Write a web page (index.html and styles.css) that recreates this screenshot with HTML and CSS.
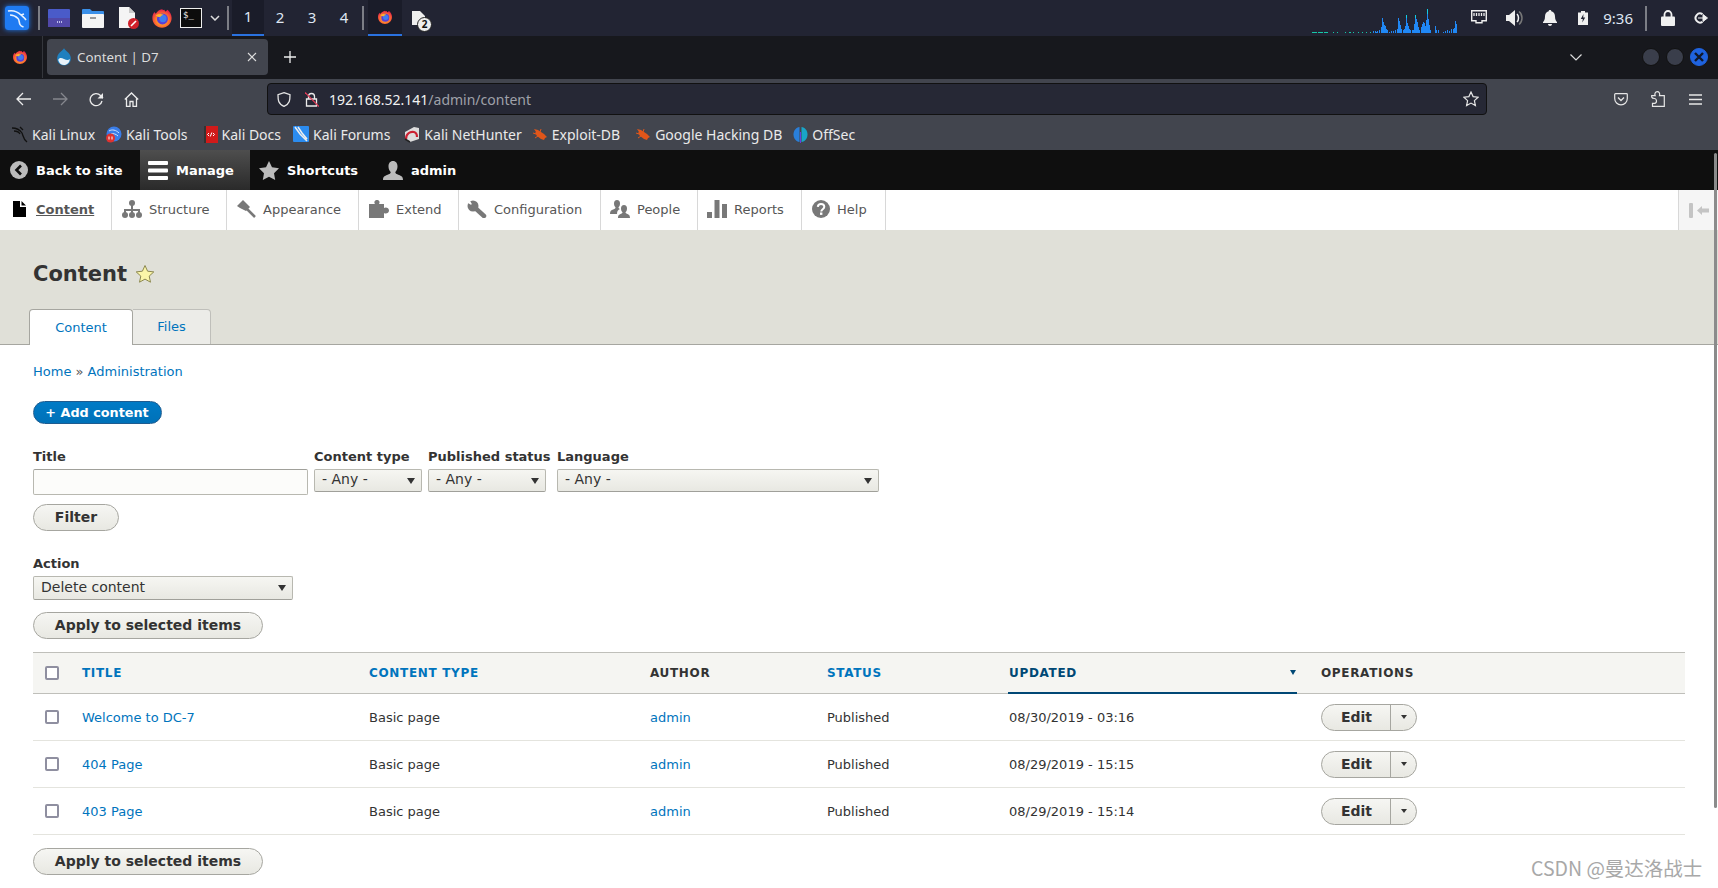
FILE: index.html
```html
<!DOCTYPE html>
<html lang="en">
<head>
<meta charset="utf-8">
<title>Content | D7</title>
<link rel="stylesheet" href="styles.css">
</head>
<body>
<svg class="defs" width="0" height="0" aria-hidden="true">
  <defs>
    <radialGradient id="ffg" cx="50%" cy="60%" r="60%"><stop offset="0" stop-color="#ffd43a"/><stop offset=".55" stop-color="#ff7a2a"/><stop offset="1" stop-color="#e3204e"/></radialGradient>
    <symbol id="firefox" viewBox="0 0 24 24">
      <path d="M12 2.500c1 1 1.600 1 3 .5-.3 1 .2 1.700 1 2l2-2c2.800 2.500 4.500 5.500 4.500 9 0 6-4.700 10.500-10.500 10.500S1.500 18 1.500 12C1.500 9.500 2.300 7.300 3.800 5.500c.3 1 .8 1.500 1.500 1.800C6.500 5 9 3 12 2.500z" fill="url(#ffg)"/>
      <circle cx="12.500" cy="13" r="6" fill="#5b3fd6"/>
      <circle cx="13" cy="12.500" r="4" fill="#3f7df0"/>
      <path d="M5 9c3-1.500 6-2 9-.5-1.500.3-3 1-4 2.500-2 0-3.500-.5-5-2z" fill="#ffb02e"/>
    </symbol>
    <symbol id="drop" viewBox="0 0 16 18">
      <path d="M8 0c.6 2.400 5.800 4.400 6.800 9.300C15.500 13.500 12.500 17.500 8 17.500S.5 13.500 1.200 9.300C2 4.400 7.400 2.400 8 0z" fill="#1f7fbe"/>
      <path d="M2.200 12c1.200-2.500 3-2.500 5.800-.9 2.500 1.200 4.500 1.400 5.800-.1-.1 3.500-2.700 6-5.800 6-2.700 0-5.100-1.900-5.800-5z" fill="#fff" opacity=".9"/>
    </symbol>
    <symbol id="bug" viewBox="0 0 16 16">
      <path d="M2 3l4 1 6 4 3 3-2 1-1 2-3-1-4-3-2-3 1-1z" fill="#e0561a"/>
      <path d="M1 7l3 1M3 12l3-2M9 3l-1 3" stroke="#e0561a" fill="none"/>
    </symbol>
  </defs>
</svg>

<div class="page">
  <header class="panel">
    <div class="panel-apps">
      <span class="kali-logo">
        <svg width="24" height="24" viewBox="0 0 24 24"><rect x="0" y="0" width="24" height="24" rx="3" fill="#1f7bf2"/><path d="M3 5c5-1 10 1 13 4 1.500 1.500 3.500 2.500 5 5M5 9c3 0 6 1.500 8 3.500 1.500 1.500 1 4 2 6 .5 1 2 2 3.500 2.500M16 9l3-1" fill="none" stroke="#e8f2ff" stroke-width="1.600"/></svg>
      </span>
      <i class="psep psep-a"></i>
      <svg class="pi" width="22" height="18" viewBox="0 0 22 18"><rect width="22" height="18" rx="1" fill="#4a5bc9"/><rect y="9" width="22" height="9" fill="#5148a8"/><path d="M9 13h5" stroke="#dfe3ff" stroke-dasharray="1 1" stroke-width="1.500"/></svg>
      <svg class="pi" width="22" height="20" viewBox="0 0 22 20"><path d="M0 2a1 1 0 0 1 1-1h7l2 2h11a1 1 0 0 1 1 1v3H0z" fill="#3a8fe8"/><rect y="6" width="22" height="14" rx="1" fill="#f4f4f4"/><rect x="8" y="9" width="6" height="2" fill="#9a9a9a"/></svg>
      <svg class="pi pi-doc" width="21" height="22" viewBox="0 0 21 22"><path d="M1 0h10l6 6v15H1z" fill="#f4f4f4"/><path d="M11 0l6 6h-6z" fill="#c9c9c9"/><circle cx="15.500" cy="16.500" r="5.500" fill="#d0202a"/><path d="M13 19l5-5" stroke="#fff" stroke-width="1.600"/></svg>
      <svg class="pi" width="22" height="22"><use href="#firefox"/></svg>
      <span class="term">$_</span>
      <svg class="chev" width="10" height="6" viewBox="0 0 10 6"><path d="M1 1l4 4 4-4" fill="none" stroke="#ddd" stroke-width="1.500"/></svg>
      <i class="psep psep-b"></i>
    </div>
    <nav class="workspaces">
      <span class="ws ws-on">1</span><span class="ws">2</span><span class="ws">3</span><span class="ws">4</span>
    </nav>
    <i class="psep psep-c"></i>
    <div class="tasks">
      <span class="task task-on"><svg width="16" height="16"><use href="#firefox"/></svg></span>
      <span class="task">
        <svg width="14" height="14" viewBox="0 0 14 14"><path d="M0 0h8l5 5v9H0z" fill="#eee"/></svg>
        <b class="count">2</b>
      </span>
    </div>
    <div class="tray">
      <svg class="net" width="146" height="26" viewBox="0 0 146 26" shape-rendering="crispEdges">
        <path d="M0 24.500h5M6 24.500h5M12 24.500h4M21 24.500h1M25 24.500h1M33 24.500h1M37 24.500h2M41 24.500h1M46 24.500h1M50 24.500h1M54 24.500h1M58 24.500h1" stroke="#16c7a8" fill="none"/>
        <path d="M62 25v-1M65 25v-1M68 25v-1M62 25v-2M64 25v-2M66 25v-2M68 25v-3M70 25v-6M71 25v-15M72 25v-11M73 25v-8M74 25v-7M75 25v-4M76 25v-3M78 25v-1M80 25v-2M82 25v-2M84 25v-3M86 25v-4M87 25v-15M88 25v-12M89 25v-8M90 25v-4M92 25v-3M93 25v-4M94 25v-7M95 25v-18M96 25v-10M97 25v-7M98 25v-4M99 25v-3M101 25v-3M102 25v-3M103 25v-9M104 25v-18M105 25v-14M106 25v-11M107 25v-6M108 25v-3M110 25v-6M111 25v-9M112 25v-11M113 25v-10M114 25v-7M115 25v-13M116 25v-24M117 25v-14M118 25v-8M119 25v-3M124 25v-7M125 25v-3M127 25v-3M132 25v-1M134 25v-2M136 25v-3M138 25v-2M140 25v-4M142 25v-4M143 25v-5M144 25v-12M145 25v-9" stroke="#2088f5" fill="none" transform="translate(-.5 0)"/>
        <path d="M115.500 1v5M94.500 7v3M103.500 7v3" stroke="#12cfe0" fill="none"/>
      </svg>
      <svg class="ti ti-net" width="16" height="14" viewBox="0 0 16 14"><path d="M.7.700h14.600v10H11v2H5v-2H.7z" fill="none" stroke="#eee" stroke-width="1.400"/><path d="M3 3v3M5.500 3v3M8 3v3M10.500 3v3M13 3v3" stroke="#eee" stroke-width="1.300"/></svg>
      <svg class="ti ti-vol" width="18" height="16" viewBox="0 0 18 16"><path d="M0 5h3l6-5v16l-6-5H0z" fill="#eee"/><path d="M11 4c2 2 2 6 0 8" stroke="#eee" stroke-width="1.500" fill="none"/><path d="M13 1.500c4 3 4 10 0 13" stroke="#777" stroke-width="1.500" fill="none"/></svg>
      <svg class="ti ti-bell" width="14" height="16" viewBox="0 0 14 16"><path d="M7 0c1 0 1.300.7 1.300 1.300C11 2 12 4 12 6.500c0 3 1 4.500 2 5.500v1H0v-1c1-1 2-2.500 2-5.500C2 4 3 2 5.700 1.300 5.700.7 6 0 7 0zM5 14h4c0 1-1 2-2 2s-2-1-2-2z" fill="#f0f0f0"/></svg>
      <svg class="ti ti-bat" width="10" height="14" viewBox="0 0 10 14"><path d="M3 0h4v1.500h3V14H0V1.500h3z" fill="#f0f0f0"/><path d="M5.500 3L2.800 8h2l-.5 3.500L7.200 6.500h-2z" fill="#222433"/></svg>
      <span class="clock">9:36</span>
      <i class="psep psep-d"></i>
      <svg class="ti ti-lock" width="14" height="16" viewBox="0 0 14 16"><path d="M3.500 7V4.500a3.500 3.500 0 0 1 7 0V7" fill="none" stroke="#f0f0f0" stroke-width="1.800"/><rect y="6.500" width="14" height="9.500" rx="1" fill="#f0f0f0"/></svg>
      <svg class="ti ti-out" width="15" height="12" viewBox="0 0 15 12"><path d="M9.500 2.200A4.500 4.500 0 1 0 9.500 9.800" fill="none" stroke="#f0f0f0" stroke-width="2"/><path d="M5 6h6M10 2.500L14.500 6 10 9.500z" stroke="#f0f0f0" fill="#f0f0f0"/></svg>
    </div>
  </header>

  <div class="tabbar">
    <span class="ff-side"><svg width="16" height="16"><use href="#firefox"/></svg></span>
    <div class="tab">
      <svg width="16" height="18"><use href="#drop"/></svg>
      <span class="tab-title">Content | D7</span>
      <svg class="tab-x" width="10" height="10" viewBox="0 0 10 10"><path d="M1 1l8 8M9 1l-8 8" stroke="#ddd" stroke-width="1.100"/></svg>
    </div>
    <svg class="tab-plus" width="12" height="12" viewBox="0 0 12 12"><path d="M6 0v12M0 6h12" stroke="#eee" stroke-width="1.300"/></svg>
    <svg class="tab-chev" width="12" height="7" viewBox="0 0 12 7"><path d="M.5.500L6 6 11.500.500" fill="none" stroke="#ddd" stroke-width="1.200"/></svg>
    <div class="winbtns">
      <i class="wb"></i><i class="wb"></i>
      <i class="wb wb-close"><svg width="10" height="10" viewBox="0 0 10 10"><path d="M1 1l8 8M9 1l-8 8" stroke="#10182a" stroke-width="2.400"/></svg></i>
    </div>
  </div>

  <div class="navbar">
    <svg class="nv nv-back" width="16" height="14" viewBox="0 0 16 14"><path d="M15 7H1.500M7 1L1 7l6 6" fill="none" stroke="#ececec" stroke-width="1.300"/></svg>
    <svg class="nv nv-fwd" width="16" height="14" viewBox="0 0 16 14"><path d="M1 7h13.500M9 1l6 6-6 6" fill="none" stroke="#85878d" stroke-width="1.300"/></svg>
    <svg class="nv nv-rel" width="15" height="15" viewBox="0 0 15 15"><path d="M13 9a6 6 0 1 1-1.500-5.500L14 6" fill="none" stroke="#ececec" stroke-width="1.300"/><path d="M14 1v5.500H8.500" fill="#ececec"/></svg>
    <svg class="nv nv-home" width="15" height="15" viewBox="0 0 15 15"><path d="M.8 7.500L7.500 1l6.700 6.500M2.500 6.500v8h3.500v-5h3v5h3.500v-8" fill="none" stroke="#ececec" stroke-width="1.300"/></svg>
    <div class="urlbar">
      <svg class="u-shield" width="14" height="15" viewBox="0 0 14 15"><path d="M7 .700l6 2c0 5 0 9-6 11.600C1 11.700 1 7.700 1 2.700z" fill="none" stroke="#e6e6e6" stroke-width="1.300"/></svg>
      <svg class="u-lock" width="14" height="15" viewBox="0 0 14 15"><path d="M3.500 7V4.500a3 3 0 0 1 6 0V7M1.500 7h10v7h-10z" fill="none" stroke="#eaeaea" stroke-width="1.300"/><path d="M0 .500L14 14.500" stroke="#e23a55" stroke-width="1.200"/></svg>
      <span class="url"><span class="url-host">192.168.52.141</span>/admin/content</span>
      <svg class="u-star" width="16" height="16" viewBox="0 0 16 16"><path d="M8 1l2.100 4.600 5 .6-3.700 3.400 1 5L8 12.100l-4.400 2.500 1-5L.9 6.200l5-.6z" fill="none" stroke="#e6e6e6" stroke-width="1.200"/></svg>
    </div>
    <svg class="nv nv-pocket" width="14" height="13" viewBox="0 0 14 13"><path d="M1.500.700h11a.8.800 0 0 1 .8.800v4a6.300 6.300 0 0 1-12.600 0v-4a.8.800 0 0 1 .8-.8z" fill="none" stroke="#e6e6e6" stroke-width="1.200"/><path d="M4 4.500l3 3 3-3" fill="none" stroke="#e6e6e6" stroke-width="1.300"/></svg>
    <svg class="nv nv-ext" width="14" height="16" viewBox="0 0 14 16"><path d="M.7 6V4.700h3.500c-1-2 .2-4 2-4s3 1.500 2.300 4h4.800v10.600H1.500v-3h2c1.500 0 2-1 2-2.300S4.500 7.500 3.500 7.500 1 7 .7 6z" fill="none" stroke="#e6e6e6" stroke-width="1.200"/></svg>
    <svg class="nv nv-menu" width="13" height="11" viewBox="0 0 13 11"><path d="M0 1h13M0 5.500h13M0 10h13" stroke="#e6e6e6" stroke-width="1.300"/></svg>
  </div>

  <div class="bookmarks">
    <a class="bm"><svg width="17" height="17" viewBox="0 0 17 17"><path d="M1 2c5 0 8 2 10 5 1 2 1 6 5 9M3 5c3 0 5 1 6 3M9 1l3 3" fill="none" stroke="#111" stroke-width="1.300"/></svg>Kali Linux</a>
    <a class="bm bm2"><svg width="16" height="17" viewBox="0 0 16 17"><circle cx="8" cy="8" r="7.500" fill="#3a7de8"/><path d="M3 5c3-2 7-1 10 2M5 8c2-1 5 0 7 2" stroke="#cfe2ff" fill="none"/><circle cx="4.500" cy="12" r="4.500" fill="#e0322f"/><path d="M3 10.500v3M6 10.500v3" stroke="#fff"/></svg>Kali Tools</a>
    <a class="bm bm3"><svg width="14" height="17" viewBox="0 0 14 17"><rect width="14" height="17" fill="#d01a1a"/><rect width="2" height="17" fill="#333"/><path d="M5 7L3.500 8.500 5 10M9 7l1.500 1.500L9 10M7.800 6.500L6.300 10.500" stroke="#fff" fill="none"/></svg>Kali Docs</a>
    <a class="bm bm4"><svg width="16" height="16" viewBox="0 0 16 16"><rect width="16" height="16" rx="1" fill="#2b8cf0"/><path d="M2 1l5 7 7 7M5 1l4 6 5 6" stroke="#eee" stroke-width="1.500" fill="none"/></svg>Kali Forums</a>
    <a class="bm bm5"><svg width="16" height="17" viewBox="0 0 16 17"><path d="M1 6l9-5 5 1v11l-9 3-5-3z" fill="#ddd"/><path d="M2 13c0-5 4-8 8-7 2 .5 3 2 3 5" stroke="#cc2233" stroke-width="2.200" fill="none"/><path d="M1 13l5 3" stroke="#222" stroke-width="1.500"/></svg>Kali NetHunter</a>
    <a class="bm bm6"><svg width="16" height="16"><use href="#bug"/></svg>Exploit-DB</a>
    <a class="bm bm7"><svg width="16" height="16"><use href="#bug"/></svg>Google Hacking DB</a>
    <a class="bm bm8"><svg width="15" height="17" viewBox="0 0 15 17"><path d="M6.500 1C3 1.500.5 4.500.5 8.500S3 15.500 6.500 16z" fill="#2a7fd8"/><path d="M8.500 1C12 1.500 14.500 4.500 14.500 8.500S12 15.500 8.500 16z" fill="#19a5c8"/><path d="M7.500 6v11" stroke="#6a3be0"/></svg>OffSec</a>
  </div>

  <div class="tb-top">
    <a class="tt tt-back"><svg width="18" height="18" viewBox="0 0 18 18"><circle cx="9" cy="9" r="9" fill="#bbb"/><path d="M11 4.500L6.500 9l4.500 4.500" fill="none" stroke="#0f0f0f" stroke-width="2.600"/></svg>Back to site</a>
    <a class="tt tt-manage"><svg width="20" height="19" viewBox="0 0 20 19"><rect width="20" height="4" rx="1" fill="#fff"/><rect y="7.500" width="20" height="4" rx="1" fill="#fff"/><rect y="15" width="20" height="4" rx="1" fill="#fff"/></svg>Manage</a>
    <a class="tt tt-short"><svg width="20" height="19" viewBox="0 0 20 19"><path d="M10 0l3 6.300 7 1-5 4.900 1.200 6.800-6.200-3.300L3.800 19 5 12.200 0 7.300l7-1z" fill="#bbb"/></svg>Shortcuts</a>
    <a class="tt tt-user"><svg width="20" height="19" viewBox="0 0 20 19"><path d="M10 0c3 0 4.500 2.400 4.500 5.500 0 2.500-1 4.500-2.200 5.500 0 1.500 1 2 3.700 3 2 .8 4 1.500 4 5H0c0-3.500 2-4.200 4-5 2.700-1 3.700-1.500 3.700-3C6.500 10 5.500 8 5.500 5.500 5.500 2.400 7 0 10 0z" fill="#bbb"/></svg>admin</a>
  </div>

  <div class="tb-tray">
    <a class="ti-item ti-on"><svg class="w-content" width="13" height="16" viewBox="0 0 13 16"><path d="M0 0h7v6h6v10H0zM8.500 0L13 4.500H8.500z" fill="#000"/></svg><span class="lbl">Content</span></a>
    <a class="ti-item w2"><svg width="20" height="18" viewBox="0 0 20 18"><g fill="#787878"><circle cx="10" cy="3" r="3"/><circle cx="3" cy="15" r="3"/><circle cx="10" cy="15" r="3"/><circle cx="17" cy="15" r="3"/></g><path d="M10 3v12M3 15v-5h14v5" fill="none" stroke="#787878" stroke-width="2"/></svg><span>Structure</span></a>
    <a class="ti-item w3"><svg width="19" height="18" viewBox="0 0 19 18"><path d="M6 0l7 7-4 4-6-3-3-2z" fill="#787878"/><path d="M10 9l8 8" stroke="#787878" stroke-width="2.500"/></svg><span>Appearance</span></a>
    <a class="ti-item w4"><svg width="20" height="18" viewBox="0 0 20 18"><path d="M0 4h6c-1.500-2 0-4 2-4s3.500 2 2 4h5v4c2-1.500 5 0 5 2.500S17 14.500 15 13v5H0z" fill="#787878"/></svg><span>Extend</span></a>
    <a class="ti-item w5"><svg width="20" height="18" viewBox="0 0 20 18"><circle cx="6" cy="6" r="5.500" fill="#787878"/><path d="M6 6L-1 2 2-1z" fill="#fff"/><path d="M6 6l11 10" stroke="#787878" stroke-width="4.500" stroke-linecap="round"/></svg><span>Configuration</span></a>
    <a class="ti-item w6"><svg width="20" height="18" viewBox="0 0 20 18"><path d="M7 0c2 0 3 1.500 3 3.500 0 1.500-.5 3-1.500 3.700 0 1 .5 1.300 1.500 1.800-2 1-3 2-3 5H0c0-3 1-3.500 2.500-4.200 2-.8 3-1 3-2.600C4.500 6.500 4 5 4 3.500 4 1.500 5 0 7 0z" fill="#787878"/><path d="M14 5c2 0 3 1.500 3 3.500 0 1.500-.5 3-1.500 3.700 0 1 1 1.300 2 1.800 1 .5 2.500 1 2.500 4H8c0-3 1.500-3.500 2.500-4 1-.5 2-.8 2-1.800-1-.7-1.500-2.200-1.500-3.700C11 6.500 12 5 14 5z" fill="#787878"/></svg><span>People</span></a>
    <a class="ti-item w7"><svg width="20" height="18" viewBox="0 0 20 18"><path d="M0 12h5v6H0zM7.500 0h5v18h-5zM15 4h5v14h-5z" fill="#787878"/></svg><span>Reports</span></a>
    <a class="ti-item w8"><svg width="18" height="18" viewBox="0 0 18 18"><circle cx="9" cy="9" r="9" fill="#787878"/><path d="M5.800 6.800C6 4.800 7.300 4 9 4c2 0 3.300 1.200 3.300 2.800 0 2.500-3 2.400-3 4.700" fill="none" stroke="#fff" stroke-width="2"/><rect x="8" y="12.500" width="2.400" height="2.400" fill="#fff"/></svg><span>Help</span></a>
    <div class="tray-collapse"><svg width="20" height="15" viewBox="0 0 20 15"><rect width="4" height="15" rx="1" fill="#c4c4c4"/><path d="M8 7.500L13 3v2.500h7v4h-7V12z" fill="#c4c4c4"/></svg></div>
  </div>

  <section class="page-head">
    <h1 class="title">Content <svg class="fav" width="20" height="20" viewBox="0 0 20 20"><path d="M10 1.500l2.600 5.700 6.200.7-4.600 4.200 1.300 6.100L10 15.100l-5.500 3.100 1.300-6.100L1.200 7.900l6.200-.7z" fill="#fbf6a8" stroke="#8c8850"/></svg></h1>
    <ul class="tabs">
      <li class="t t-on"><a>Content</a></li>
      <li class="t t-off"><a>Files</a></li>
    </ul>
  </section>

  <main class="main">
    <p class="crumbs"><a>Home</a> » <a>Administration</a></p>
    <a class="add-btn">+ Add content</a>

    <form class="filters">
      <div class="f f-title"><label>Title</label><input type="text" class="inp"></div>
      <div class="f f-type"><label>Content type</label><div class="sel"><select><option>- Any -</option></select></div></div>
      <div class="f f-pub"><label>Published status</label><div class="sel"><select><option>- Any -</option></select></div></div>
      <div class="f f-lang"><label>Language</label><div class="sel"><select><option>- Any -</option></select></div></div>
    </form>
    <button type="button" class="btn btn-filter">Filter</button>

    <div class="f f-action"><label>Action</label><div class="sel"><select><option>Delete content</option></select></div></div>
    <button type="button" class="btn btn-apply">Apply to selected items</button>

    <table class="grid">
      <colgroup><col class="c1"><col class="c2"><col class="c3"><col class="c4"><col class="c5"><col class="c6"><col class="c7"></colgroup>
      <thead>
        <tr>
          <th class="cb"><input type="checkbox" class="chk"></th>
          <th><a>Title</a></th>
          <th><a>Content type</a></th>
          <th class="plain">Author</th>
          <th><a>Status</a></th>
          <th class="sorted"><div class="sort-in"><a>Updated</a><i class="sort-arrow"></i></div></th>
          <th class="plain">Operations</th>
        </tr>
      </thead>
      <tbody>
        <tr>
          <td class="cb"><input type="checkbox" class="chk"></td>
          <td><a>Welcome to DC-7</a></td><td>Basic page</td><td><a>admin</a></td><td>Published</td><td>08/30/2019 - 03:16</td>
          <td><div class="drop"><span class="drop-main">Edit</span><span class="drop-tog"><i></i></span></div></td>
        </tr>
        <tr>
          <td class="cb"><input type="checkbox" class="chk"></td>
          <td><a>404 Page</a></td><td>Basic page</td><td><a>admin</a></td><td>Published</td><td>08/29/2019 - 15:15</td>
          <td><div class="drop"><span class="drop-main">Edit</span><span class="drop-tog"><i></i></span></div></td>
        </tr>
        <tr>
          <td class="cb"><input type="checkbox" class="chk"></td>
          <td><a>403 Page</a></td><td>Basic page</td><td><a>admin</a></td><td>Published</td><td>08/29/2019 - 15:14</td>
          <td><div class="drop"><span class="drop-main">Edit</span><span class="drop-tog"><i></i></span></div></td>
        </tr>
      </tbody>
    </table>
    <button type="button" class="btn btn-apply btn-apply2">Apply to selected items</button>
  </main>

  <div class="scrollbar"></div>
  <div class="watermark">CSDN @曼达洛战士</div>
</div>
</body>
</html>
```
FILE: styles.css
```css
* { box-sizing: border-box; }
html, body { margin: 0; padding: 0; height: 888px; overflow: hidden; background: #fff; }
body { font-family: "DejaVu Sans", sans-serif; font-size: 13px; color: #333; }
.defs { position: absolute; }
.page { position: relative; width: 1718px; height: 888px; overflow: hidden; }
svg { display: block; flex: none; }

/* desktop panel */
.panel { height: 36px; background: #222433; display: flex; align-items: center; font-family: "Noto Sans", sans-serif; color: #dfe6f2; }
.panel-apps { display: flex; align-items: center; height: 36px; padding-left: 5px; }
.kali-logo { display: block; width: 24px; box-shadow: 0 0 5px #1f7bf2; border-radius: 3px; }
.psep { display: block; width: 2px; height: 24px; background: #7c7e86; margin: 0 9px; flex: none; }
.psep-a { margin: 0 8px 0 9px; }
.pi { margin-right: 12px; }
.pi-doc { margin-left: 2px; margin-right: 12px; }
.term { display: block; width: 22px; height: 20px; background: #0c0c0c; border: 1px solid #eee; color: #eee; font: 9px/12px "DejaVu Sans Mono", monospace; padding-left: 2px; margin-left: -5px; }
.chev { margin-left: 8px; }
.psep-b { margin: 0 3px 0 7px; }
.workspaces { display: flex; height: 36px; }
.ws { width: 32px; display: flex; align-items: center; justify-content: center; font-size: 15px; padding-bottom: 2px; }
.ws-on { background: #1a1c29; border-bottom: 2px solid #2a72e0; }
.psep-c { margin: 0 4px 0 2px; }
.tasks { display: flex; height: 36px; }
.task { position: relative; width: 34px; display: flex; align-items: center; justify-content: center; }
.task-on { background: #1a1c29; border-bottom: 2px solid #2a72e0; }
.count { position: absolute; left: 15px; top: 17px; width: 15px; height: 15px; border-radius: 50%; background: #eee; border: 1px solid #222; color: #111; font: 700 10px/13px "Noto Sans", sans-serif; text-align: center; }
.tray { margin-left: auto; display: flex; align-items: center; height: 36px; padding-right: 10px; }
.net { align-self: flex-end; margin: 0 13px 2px 0; }
.ti-net { margin: 0 0 2px 0; }
.ti-vol { margin: 0 0 0 19px; }
.ti-bell { margin: 0 0 0 19px; }
.ti-bat { margin: 0 0 0 21px; }
.clock { font-size: 15px; margin: 0 0 0 15px; color: #dfe6f2; }
.psep-d { height: 25px; margin: 0 13px 0 12px; }
.ti-lock { margin: 0 0 0 1px; }
.ti-out { margin: 0 0 0 18px; }

/* browser tab strip */
.tabbar { height: 43px; background: #17181d; display: flex; align-items: center; padding-bottom: 1px; font-family: "Noto Sans", sans-serif; }
.ff-side { width: 43px; height: 42px; display: flex; align-items: center; padding-left: 12px; border-right: 1px solid #34363c; flex: none; }
.tab { width: 221px; height: 36px; margin-left: 4px; background: #42454e; border-radius: 4px; display: flex; align-items: center; padding: 0 11px 0 9px; color: #dcdcdc; }
.tab-title { margin-left: 5px; font-size: 13.300px; flex: 1; }
.tab-plus { margin-left: 16px; }
.tab-chev { margin-left: auto; margin-right: 60px; }
.winbtns { display: flex; gap: 6px; padding-right: 10px; }
.wb { width: 18px; height: 18px; border-radius: 50%; background: #3a3e4b; border: 1px solid #111; display: flex; align-items: center; justify-content: center; }
.wb-close { background: #1f63e0; border-color: #1f63e0; }

/* browser nav */
.navbar { height: 40px; background: #42454e; display: flex; align-items: center; font-family: "Noto Sans", sans-serif; }
.nv-back { margin-left: 16px; }
.nv-fwd { margin-left: 20px; }
.nv-rel { margin-left: 21px; }
.nv-home { margin-left: 20px; }
.urlbar { width: 1220px; height: 32px; margin-left: 128px; background: #262835; border: 1px solid #111; border-radius: 4px; display: flex; align-items: center; padding: 0 7px 0 9px; }
.u-lock { margin-left: 14px; }
.url { margin-left: 10px; font-size: 14px; color: #9fa1a9; flex: 1; }
.url-host { color: #f2f2f2; }
.nv-pocket { margin-left: 127px; }
.nv-ext { margin-left: 23px; }
.nv-menu { margin-left: 24px; }

/* bookmarks */
.bookmarks { height: 31px; background: #42454e; display: flex; align-items: center; gap: 12px; padding: 0 0 1px 11px; font-family: "Noto Sans", sans-serif; font-size: 14px; color: #eaeaea; }
.bm { display: flex; align-items: center; gap: 4px; }
.bm2 { margin-left: -1px; }
.bm3 { margin-left: 4px; }
.bm4 { margin-left: 0; }
.bm5 { margin-left: 2px; }
.bm6 { margin-left: -2px; }
.bm7 { margin-left: 3px; }
.bm8 { margin-left: -1px; }

/* drupal toolbar */
.tb-top { height: 40px; background: #0f0f0f; display: flex; color: #fff; font-weight: 700; font-size: 13px; }
.tt { display: flex; align-items: center; gap: 8px; }
.tt-back { width: 140px; padding-left: 10px; }
.tt-manage { width: 110px; padding-left: 8px; background: linear-gradient(#4e4e4e, #2a2a2a); }
.tt-short { width: 124px; padding-left: 9px; }
.tt-user { padding-left: 9px; }
.tb-tray { height: 40px; background: #fff; display: flex; box-shadow: 0 2px 0 #b4b4ae; position: relative; color: #565656; font-size: 13px; }
.ti-item { display: flex; align-items: center; gap: 7px; padding-left: 10px; padding-bottom: 2px; border-right: 1px solid #d8d8d8; }
.ti-on { width: 112px; padding-left: 13px; gap: 10px; color: #000; font-weight: 700; }
.ti-on .lbl { text-decoration: underline; }
.w2 { width: 115px; }
.w3 { width: 132px; }
.w4 { width: 100px; }
.w5 { width: 142px; padding-left: 8px; }
.w6 { width: 97px; padding-left: 9px; }
.w7 { width: 104px; padding-left: 9px; }
.w8 { width: 84px; }
.tray-collapse { margin-left: auto; width: 40px; padding-left: 10px; background: #f5f5f5; border-left: 1px solid #d8d8d8; display: flex; align-items: center; }

/* page head */
.page-head { height: 115px; background: #e0e0d8; border-bottom: 1px solid #a6a6a0; padding: 33px 0 0 33px; position: relative; }
.title { margin: 0; font-size: 21px; line-height: 22px; font-weight: 700; color: #333; display: flex; align-items: center; gap: 8px; }
.tabs { list-style: none; margin: 24px 0 0 -4px; padding: 0; display: flex; height: 36px; }
.t { color: #0074bd; font-size: 13px; display: flex; align-items: center; justify-content: center; border: 1px solid #bfbfba; border-bottom: 0; border-radius: 4px 4px 0 0; padding-bottom: 1px; }
.t-on { width: 104px; background: #fff; height: 36px; position: relative; z-index: 1; border-color: #a6a6a0; }
.t-off { width: 78px; height: 35px; background: #ecece8; border-left: 0; border-radius: 0 4px 0 0; }

/* main */
.main { padding: 19px 33px 0; }
.crumbs { margin: 0; line-height: 16px; font-size: 13px; color: #555; }
a { color: #0074bd; text-decoration: none; }
.tb-top a, .tb-tray a, .bookmarks a { color: inherit; }
.add-btn { display: inline-block; margin-top: 21px; height: 23px; width: 129px; padding-right: 1px; background: linear-gradient(#007bc6, #0071b8); border: 1px solid #1e5c90; border-radius: 12px; color: #fff; font-weight: 700; font-size: 12.800px; line-height: 21px; text-align: center; vertical-align: top; }
.filters { display: flex; margin-top: 25px; }
.f label { display: block; font-weight: 700; font-size: 13px; line-height: 15px; color: #333; margin-bottom: 5px; white-space: nowrap; }
.inp { display: block; width: 275px; height: 26px; background: #fcfcfa; border: 1px solid #b8b8b0; border-top-color: #a0a09a; border-radius: 2px; padding: 0; }
.f-type { margin-left: 6px; width: 108px; }
.f-pub { margin-left: 6px; width: 118px; }
.f-lang { margin-left: 11px; width: 322px; }
.f-action { margin-top: 25px; width: 260px; }
.sel { position: relative; height: 23px; }
.sel select { appearance: none; -webkit-appearance: none; display: block; width: 100%; height: 23px; border: 1px solid #b8b8b0; border-bottom-color: #a0a09a; border-radius: 2px; background: linear-gradient(#f6f6f2, #e8e8e2); color: #333; font: 14px "DejaVu Sans", sans-serif; padding: 0 0 3px 7px; margin: 0; }
.sel::after { content: ""; position: absolute; right: 7px; top: 9px; border: 4px solid transparent; border-top: 6px solid #333; border-bottom: 0; pointer-events: none; }
.f-action .sel, .f-action select { height: 24px; padding-bottom: 2px; }
.btn { display: block; height: 27px; border: 1px solid #a6a6a0; border-radius: 14px; background: linear-gradient(#f6f6f3, #e8e8e2); font: 700 14px "DejaVu Sans", sans-serif; color: #333; padding: 0 0 2px; }
.btn-filter { width: 86px; margin-top: 9px; }
.btn-apply { width: 230px; margin-top: 12px; }
.btn-apply2 { margin-top: 13px; }

/* table */
.grid { width: 1652px; table-layout: fixed; border-collapse: collapse; margin-top: 13px; }
.c1 { width: 49px; } .c2 { width: 287px; } .c3 { width: 281px; } .c4 { width: 177px; } .c5 { width: 182px; } .c6 { width: 312px; } .c7 { width: 364px; }
.grid th { height: 41px; background: #f5f5f2; border-top: 1px solid #bfbfba; border-bottom: 1px solid #bfbfba; text-align: left; padding: 0; font-size: 12px; font-weight: 700; text-transform: uppercase; letter-spacing: .67px; }
.grid th.plain { color: #333; }
.grid td { height: 47px; border-bottom: 1px solid #e4e4de; padding: 0; font-size: 13px; color: #333; }
.cb { padding-left: 12px !important; }
.chk { appearance: none; -webkit-appearance: none; display: block; width: 14px; height: 14px; margin: 0; border: 2px solid #8f8fa0; border-radius: 2px; background: #fff; }
.grid th.sorted { position: relative; }
.sort-in { position: absolute; left: -1px; top: 0; bottom: -1px; width: 289px; padding-left: 1px; display: flex; align-items: center; justify-content: space-between; border-bottom: 2px solid #004875; }
.sort-in a { color: #004875; }
.sort-arrow { border: 3.500px solid transparent; border-top: 5px solid #004875; border-bottom: 0; margin-right: 1px; }
.drop { display: flex; width: 96px; height: 27px; border: 1px solid #a6a6a0; border-radius: 14px; background: linear-gradient(#f6f6f3, #e8e8e2); overflow: hidden; font-weight: 700; font-size: 14px; }
.drop-main { width: 69px; text-align: center; line-height: 24px; border-right: 1px solid #a6a6a0; padding-left: 1px; }
.drop-tog { flex: 1; display: flex; align-items: center; justify-content: center; }
.drop-tog i { border: 3.500px solid transparent; border-top: 4px solid #333; border-bottom: 0; }

.scrollbar { position: absolute; right: 1px; top: 153px; width: 3px; height: 655px; background: #8b8b8b; border-radius: 2px; }
.watermark { position: absolute; left: 1531px; top: 856px; font: 19.500px/24px "Noto Sans CJK SC", "Noto Sans", sans-serif; color: #a8a8a8; }
```
